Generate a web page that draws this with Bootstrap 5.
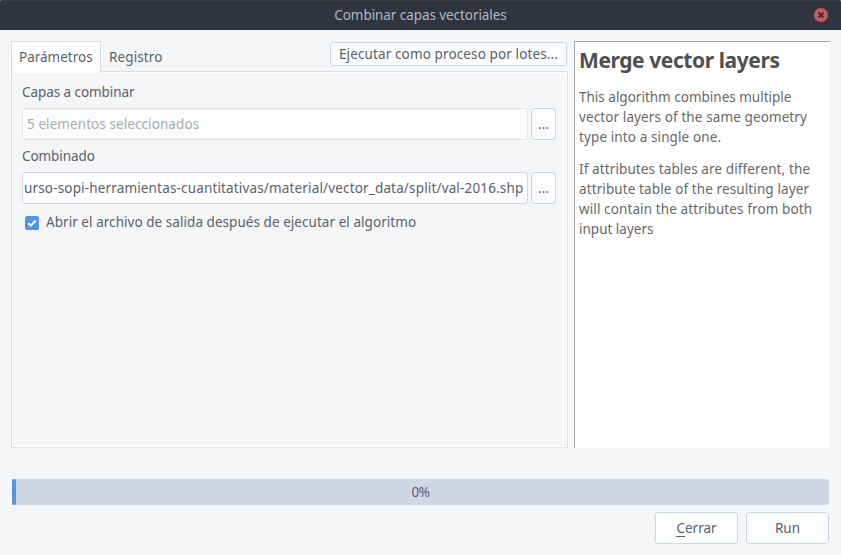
<!DOCTYPE html>
<html lang="es">
<head>
<meta charset="utf-8">
<meta name="viewport" content="width=device-width, initial-scale=1">
<title>Combinar capas vectoriales</title>
<link href="https://cdn.jsdelivr.net/npm/bootstrap@5.3.0/dist/css/bootstrap.min.css" rel="stylesheet">
<style>
body { font: 13.5px/20px "Noto Sans", sans-serif; color: #5c616c; background: #f5f6f8; height: 555px; overflow: hidden; }
.window-backdrop { background: #8b8e94; }
.title-bar { height: 30px; background: #2f343f; color: #afb8c6; box-shadow: inset 0 1px #373c48; border-radius: 3px 3px 0 0; display: grid; grid-template-columns: 40px 1fr 40px; }
.close-btn { width: 14px; height: 14px; }
.work { padding: 11px 11px 0; height: 418px; gap: 6px; }
.left-side { width: 557px; }
.tab-strip { height: 30px; }
.tab-strip .nav-link { color: #5c616c; padding: 0 8px; border: 0; border-radius: 0; background: transparent; text-align: left; white-space: nowrap; line-height: 20px; }
.tab-strip .nav-link.active { width: 90px; height: 32px; margin-bottom: -2px; padding: 0 0 2px 7px; background: #fff; border: 1px solid #dcdfe3; border-bottom: 0; position: relative; z-index: 1; }
.tab-strip .second { padding-top: 2px; }
.tool-btn { background: #fbfdfd; border: 1px solid #cfd6e6; border-radius: 3px; color: #5c616c; font-size: inherit; line-height: 20px; padding: 0; white-space: nowrap; }
.batch { width: 237px; height: 24px; margin: 1px 1px 0 0; }
.pane { border: 1px solid #dcdfe3; box-shadow: inset 0 0 0 1px #fff; padding: 10px 11px 0 10px; }
.field { height: 32px; padding: 5px 1px; border: 1px solid #cfd6e6; border-radius: 3px; background: #fff; white-space: nowrap; overflow: hidden; min-width: 0; }
.field.off { border-color: #e2e7ef; background: #fbfdfc; color: #a9acb2; padding-left: 4px; }
.input-row { gap: 3px; }
.label-one { margin-bottom: 6px; }
.label-two { margin: 6px 0; }
.open-row { margin: 9px 0 0 3px; gap: 7px; }
.open-text { letter-spacing: .05px; margin-top: -1px; }
.dots { width: 25px; height: 32px; }
.tick { width: 14px; height: 14px; }
.help { background: #fff; border-left: 1px solid #a5a8ac; border-top: 1px solid #a5a8ac; padding: 5px 4px; color: #686868; white-space: nowrap; letter-spacing: .11px; }
.help h2 { font-size: 21px; line-height: 28px; font-weight: 700; color: #505050; margin: -1px 0 13px; letter-spacing: -.42px; }
.help p { margin: 0 0 12px; }
.ls-flat { letter-spacing: 0; }
.ls-tight { letter-spacing: -.07px; }
.ls-path { letter-spacing: .157px; }
.ls-batch { letter-spacing: .12px; }
.ls-soft { letter-spacing: .08px; }
.meter { height: 26px; margin: 31px 12px 0; background: #cfd6e6; border-radius: 3px; display: grid; align-items: center; grid-template-columns: 4px 1fr 4px; font-size: 13.5px; letter-spacing: -.4px; }
.meter-fill { background: #5294e2; border-radius: 2px; height: 26px; }
.actions { gap: 8px; padding: 7px 12px 0; }
.actions .tool-btn { width: 83px; height: 32px; }
.key { border-bottom: 1px solid #5c616c; display: inline-block; line-height: 15px; }
</style>
<script src="https://cdn.jsdelivr.net/npm/bootstrap@5.3.0/dist/js/bootstrap.bundle.min.js"></script>
</head>
<body>
<div class="window-backdrop">
<header class="title-bar align-items-center">
  <span></span><span class="text-center ls-tight">Combinar capas vectoriales</span>
  <svg class="close-btn m-auto" viewBox="0 0 14 14" role="button" aria-label="Cerrar ventana"><circle cx="7" cy="7" r="7" fill="#cc575d"/><path d="M4.5 4.5l5 5m0-5l-5 5" stroke="#2f343f" stroke-width="1.9"/></svg>
</header>
</div>
<main class="work d-flex">
  <section class="left-side d-flex flex-column">
    <div class="tab-strip d-flex">
      <nav class="nav flex-nowrap" role="tablist">
        <button class="nav-link active" role="tab">Parámetros</button>
        <button class="nav-link second ls-batch" role="tab">Registro</button>
      </nav>
      <button class="tool-btn batch ms-auto ls-batch">Ejecutar como proceso por lotes...</button>
    </div>
    <div class="pane flex-grow-1">
      <div class="label-one ls-tight">Capas a combinar</div>
      <div class="d-flex input-row"><div class="field off flex-grow-1 ls-soft">5 elementos seleccionados</div><button class="tool-btn dots">...</button></div>
      <div class="label-two ls-tight">Combinado</div>
      <div class="d-flex input-row"><div class="field flex-grow-1 ls-path">urso-sopi-herramientas-cuantitativas/material/vector_data/split/val-2016.shp</div><button class="tool-btn dots">...</button></div>
      <label class="d-flex align-items-center open-row">
        <svg class="tick" viewBox="0 0 14 14"><rect width="14" height="14" rx="2" fill="#5294e2"/><path d="M3.3 7.2l2.5 2.4 4.9-5.1" fill="none" stroke="#fff" stroke-width="2"/></svg>
        <span class="open-text">Abrir el archivo de salida después de ejecutar el algoritmo</span>
      </label>
    </div>
  </section>
  <aside class="help flex-grow-1">
    <h2>Merge vector layers</h2>
    <p><span class="ls-flat">This algorithm combines multiple</span><br>vector layers of the same geometry<br>type into a single one.</p>
    <p>If attributes tables are different, the<br>attribute table of the resulting layer<br>will contain the attributes from both<br><span class="ls-flat">input layers</span></p>
  </aside>
</main>
<div class="meter" role="progressbar" aria-valuenow="0" aria-valuemin="0" aria-valuemax="100"><span class="meter-fill"></span><span class="text-center">0%</span></div>
<footer class="actions d-flex justify-content-end">
  <button class="tool-btn"><span class="key">C</span>errar</button>
  <button class="tool-btn">Run</button>
</footer>
</body>
</html>
